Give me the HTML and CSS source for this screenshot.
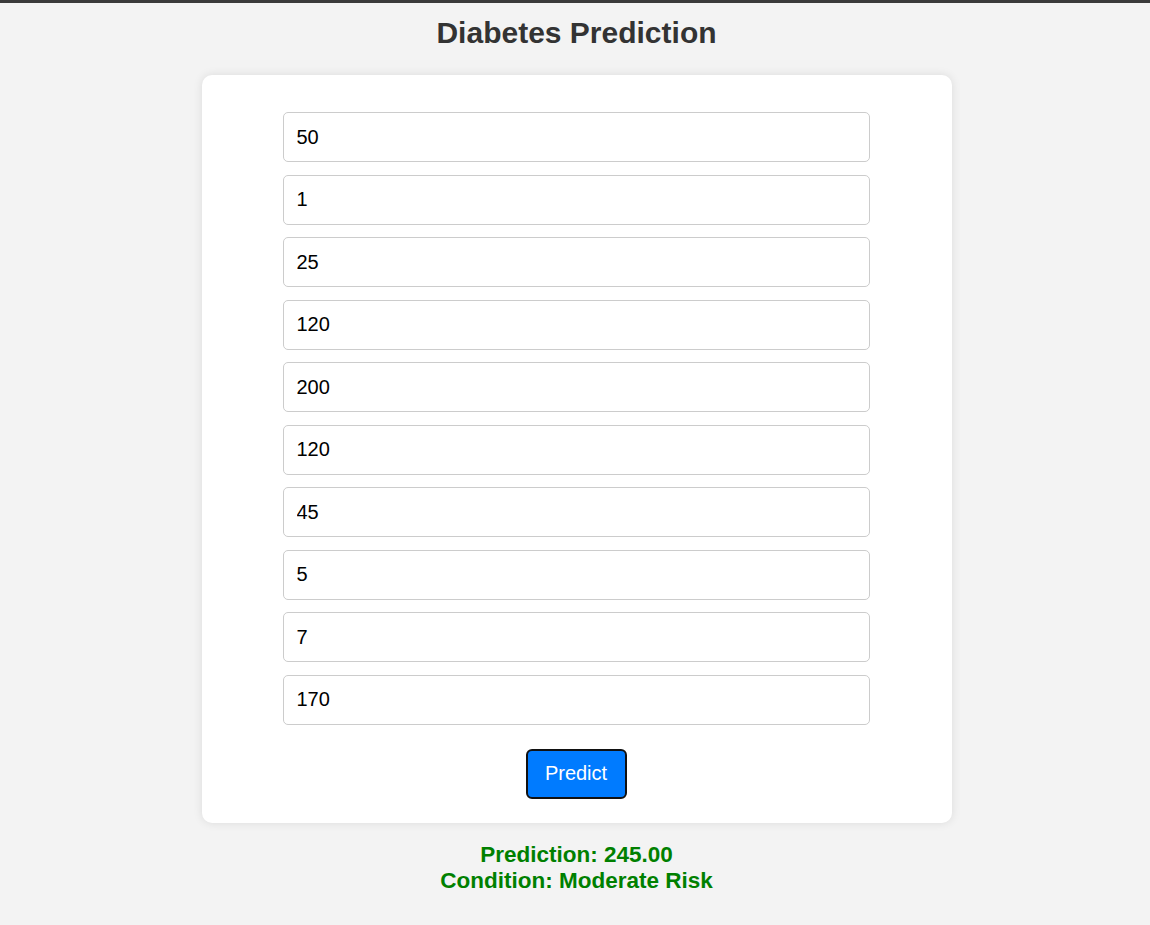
FILE: index.html
```html
<!DOCTYPE html>
<html lang="en">
<head>
<meta charset="utf-8">
<title>Diabetes Prediction</title>
<link rel="stylesheet" href="styles.css">
</head>
<body>
<div class="page">
  <h1 class="title">Diabetes Prediction</h1>
  <form class="card">
    <input class="field" type="text" value="50">
    <input class="field" type="text" value="1">
    <input class="field" type="text" value="25">
    <input class="field" type="text" value="120">
    <input class="field" type="text" value="200">
    <input class="field" type="text" value="120">
    <input class="field" type="text" value="45">
    <input class="field" type="text" value="5">
    <input class="field" type="text" value="7">
    <input class="field" type="text" value="170">
    <button class="predict" type="button">Predict</button>
  </form>
  <div class="result">
    <div>Prediction: 245.00</div>
    <div>Condition: Moderate Risk</div>
  </div>
</div>
</body>
</html>
```

FILE: styles.css
```css
html, body {
  margin: 0;
  padding: 0;
}
body {
  background: #f3f3f3;
  border-top: 3px solid #3a3a3a;
  font-family: "Liberation Sans", Arial, sans-serif;
  min-height: 922px;
}
.page {
  display: flex;
  flex-direction: column;
  align-items: center;
  padding-left: 3px;
}
.title {
  margin: 12px 0 25px;
  font-size: 30px;
  font-weight: bold;
  color: #333;
  line-height: 35px;
}
.card {
  width: 750px;
  box-sizing: border-box;
  background: #fff;
  border-radius: 10px;
  box-shadow: 0 0 10px rgba(0, 0, 0, 0.1);
  padding: 37px 82px 24px 81px;
  display: flex;
  flex-direction: column;
  align-items: center;
  gap: 12.5px;
}
.field {
  width: 100%;
  height: 50px;
  box-sizing: border-box;
  border: 1px solid #ccc;
  border-radius: 5px;
  padding: 0 13px;
  font-family: "Liberation Sans", Arial, sans-serif;
  font-size: 20px;
  color: #000;
  background: #fff;
  outline: none;
}
.predict {
  margin-top: 12px;
  width: 101px;
  height: 50px;
  box-sizing: border-box;
  background: #007bff;
  color: #fff;
  border: 2px solid #111;
  border-radius: 6px;
  font-family: "Liberation Sans", Arial, sans-serif;
  font-size: 20px;
  padding: 0 0 2px;
}
.result {
  margin-top: 19px;
  text-align: center;
  color: #008000;
  font-weight: bold;
  font-size: 22.5px;
  line-height: 26px;
}
```
